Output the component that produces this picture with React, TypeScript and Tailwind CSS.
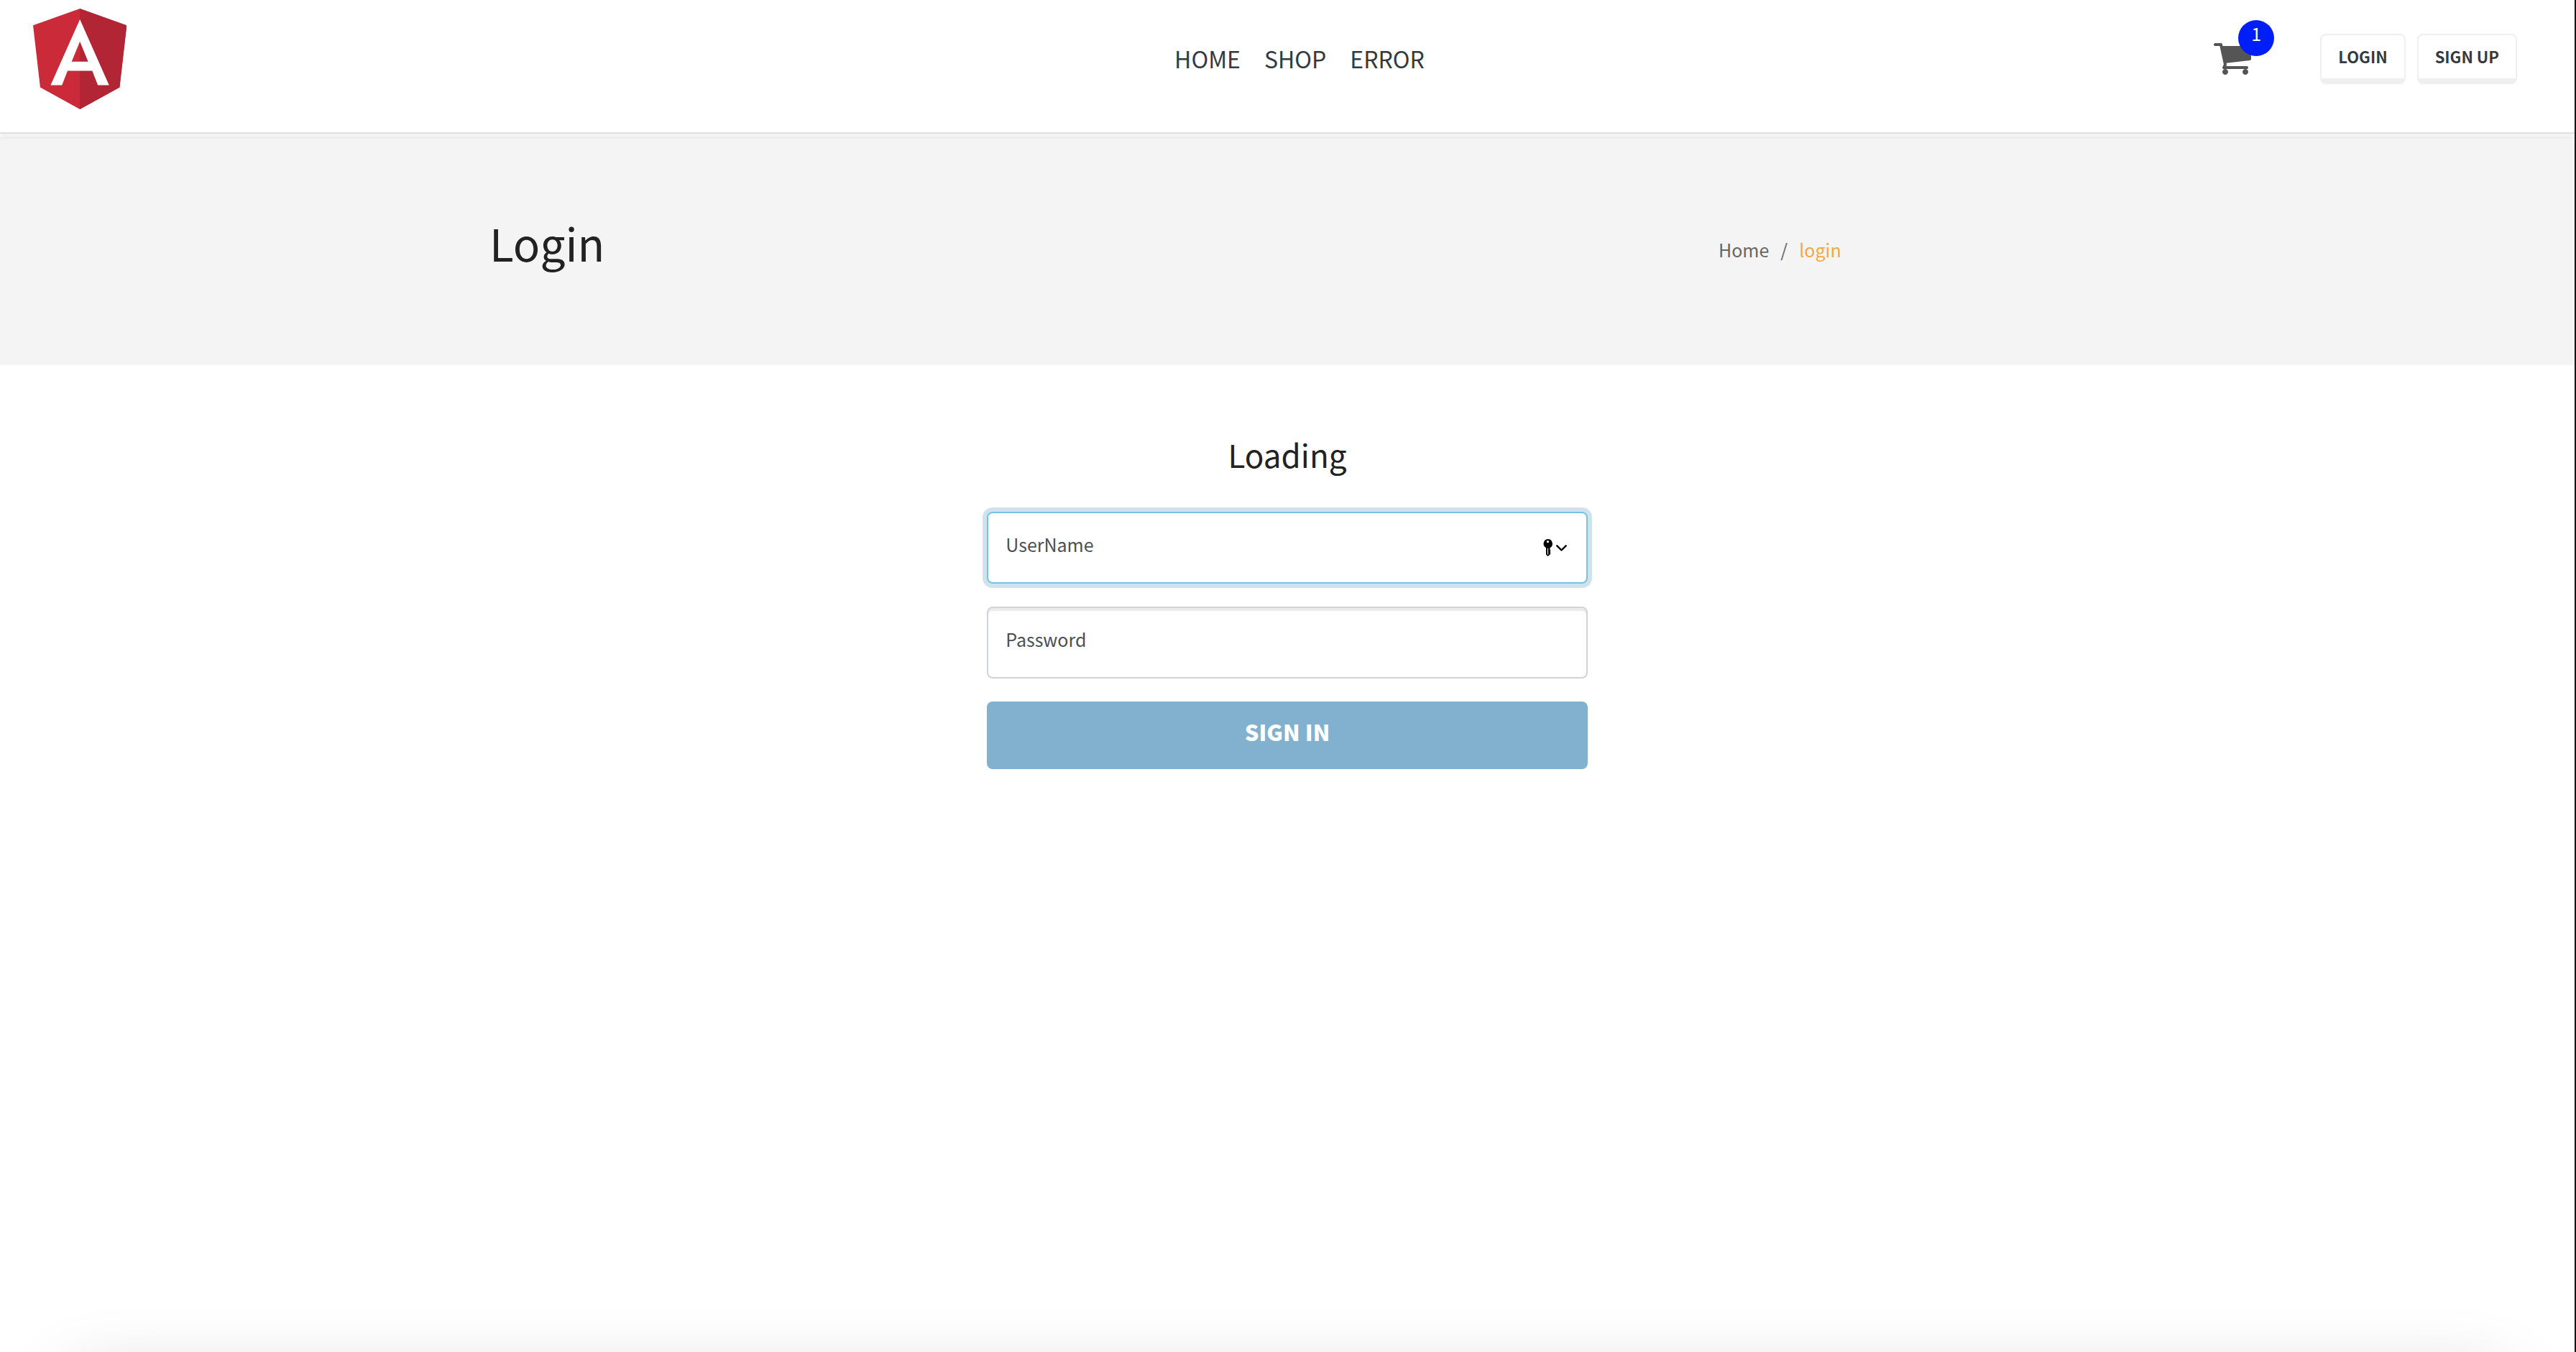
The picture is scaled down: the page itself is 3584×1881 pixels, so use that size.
import React from "react";

function AngularLogo() {
  return (
    <svg viewBox="31.9 30 186.2 200" className="h-35 w-auto" aria-hidden="true">
      <path fill="#cb2b39" d="M125 30L31.9 63.2l14.2 123.1L125 230l78.9-43.7 14.2-123.1z" />
      <path fill="#b22534" d="M125 30V230l78.9-43.7 14.2-123.1L125 30z" />
      <path
        fill="#fff"
        d="M125 51.5L66.8 182.2h22.5l11.2-28.8h49l11.2 28.8H183L125 51.5zm16.4 83.7h-32.8L125 95.5l16.4 39.7z"
      />
    </svg>
  );
}

function CartIcon() {
  return (
    <svg viewBox="64 256 1664 1408" className="h-11 w-[52px] fill-[#555]" aria-hidden="true">
      <path d="M704 1536q0 52-38 90t-90 38-90-38-38-90 38-90 90-38 90 38 38 90zm896 0q0 52-38 90t-90 38-90-38-38-90 38-90 90-38 90 38 38 90zm128-1088v512q0 24-16.5 42.5t-40.5 21.5l-1044 122q13 60 13 70 0 16-24 64h920q26 0 45 19t19 45-19 45-45 19h-1024q-26 0-45-19t-19-45q0-11 8-31.5t16-36 21.5-40 15.5-29.5l-177-823h-204q-26 0-45-19t-19-45 19-45 45-19h256q16 0 28.5 6.5t19.5 15.5 13 24.5 8 26 5.5 29.5 4.5 26h1201q26 0 45 19t19 45z" />
    </svg>
  );
}

function KeyIcon() {
  return (
    <svg viewBox="0 0 34 24" className="h-6 w-[34px]" aria-hidden="true">
      <path
        fillRule="evenodd"
        d="M6.5 0a6.5 6.5 0 0 1 3 12.2V15l1 .8-1 1.2 1 1-1 1.2 1 1-1 1.4-3 2.4L4 21.6V12.2A6.5 6.5 0 0 1 6.5 0zm0 2a1.6 1.6 0 1 0 0 3.2 1.6 1.6 0 0 0 0-3.2zM6 13v8.5h1V13z"
      />
      <path
        d="M19.3 9.3l6.2 6.2 6.2-6.2"
        fill="none"
        stroke="#000"
        strokeWidth="2.4"
        strokeLinecap="round"
        strokeLinejoin="round"
      />
    </svg>
  );
}

const links = ["HOME", "SHOP", "ERROR"];
const accountActions = ["LOGIN", "SIGN UP"];

function Header() {
  return (
    <header className="relative mb-1 grid grid-cols-[1fr_auto_1fr] items-center border-b-2 border-[#dee2e6] bg-white px-[46px] pt-3 pb-8 shadow-[0_4px_8px_rgba(0,0,0,0.075)]">
      <a href="#" aria-label="Angular" className="justify-self-start">
        <AngularLogo />
      </a>
      <nav className="mb-0.5 flex gap-[33px] pl-[34px] text-[32px] leading-12 text-[#343a40]">
        {links.map((l) => (
          <a key={l} href="#">
            {l}
          </a>
        ))}
      </nav>
      <div className="flex items-center gap-4 justify-self-end pr-[34px]">
        <a href="#" aria-label="Cart" className="relative mr-20">
          <CartIcon />
          <span className="absolute -top-8 left-[34px] flex size-[50px] items-center justify-center rounded-full bg-[#001ef8] pb-3 text-[25px] text-white">
            1
          </span>
        </a>
        {accountActions.map((a) => (
          <button
            key={a}
            type="button"
            className="rounded-lg border-2 border-b-8 border-[#efefef] bg-white px-[23px] pt-[11px] pb-[13px] text-[22px] leading-9 font-bold text-[#343a40]"
          >
            {a}
          </button>
        ))}
      </div>
    </header>
  );
}

export default function App() {
  return (
    <div className="flex min-h-screen flex-col overflow-hidden border-r-2 border-[#10161a] bg-white font-['Noto_Sans_CJK_SC',sans-serif] text-[#222]">
      <Header />
      <section className="bg-[#f4f4f4] pt-27 pb-28">
        <div className="mx-auto grid w-full max-w-[2280px] grid-cols-4 items-center">
          <h1 className="col-span-3 mb-5 px-[30px] text-[62px] leading-[78px]">Login</h1>
          <nav className="flex gap-4 px-[30px] text-[25px] leading-10 text-[#666]" aria-label="Breadcrumb">
            <a href="#">Home</a>
            <span>/</span>
            <a href="#" className="text-[#f6a93b]">
              login
            </a>
          </nav>
        </div>
      </section>
      <main className="flex-1">
        <form className="mx-auto flex w-1/4 flex-col gap-8 px-[30px] pt-24" onSubmit={(e) => e.preventDefault()}>
          <h2 className="mb-5 text-center text-[44px] leading-14">Loading</h2>
          <div className="relative">
            <input
              type="text"
              aria-label="UserName"
              placeholder="UserName"
              className="h-[100px] w-full rounded-lg border-2 border-[#78c2e7] bg-white px-6 pb-2.5 text-[25px] text-[#495057] shadow-[0_0_0_6px_#cfe2ee] outline-none placeholder:text-[#495057]"
            />
            <button type="button" aria-label="Saved passwords" className="absolute top-[38px] right-7">
              <KeyIcon />
            </button>
          </div>
          <input
            type="password"
            aria-label="Password"
            placeholder="Password"
            className="h-[100px] w-full rounded-lg border-2 border-[#ced4da] bg-white px-6 pb-2.5 text-[25px] text-[#495057] shadow-[inset_0_4px_0_#ebebeb] outline-none placeholder:text-[#495057]"
          />
          <button
            type="submit"
            className="h-[94px] rounded-lg bg-[#82b1cf] pb-2.5 text-[31px] font-black text-white"
          >
            SIGN IN
          </button>
        </form>
      </main>
      <footer className="mx-24 -mb-48 h-48 bg-white shadow-[0_32px_96px_rgba(0,0,0,0.175)]" />
    </div>
  );
}
